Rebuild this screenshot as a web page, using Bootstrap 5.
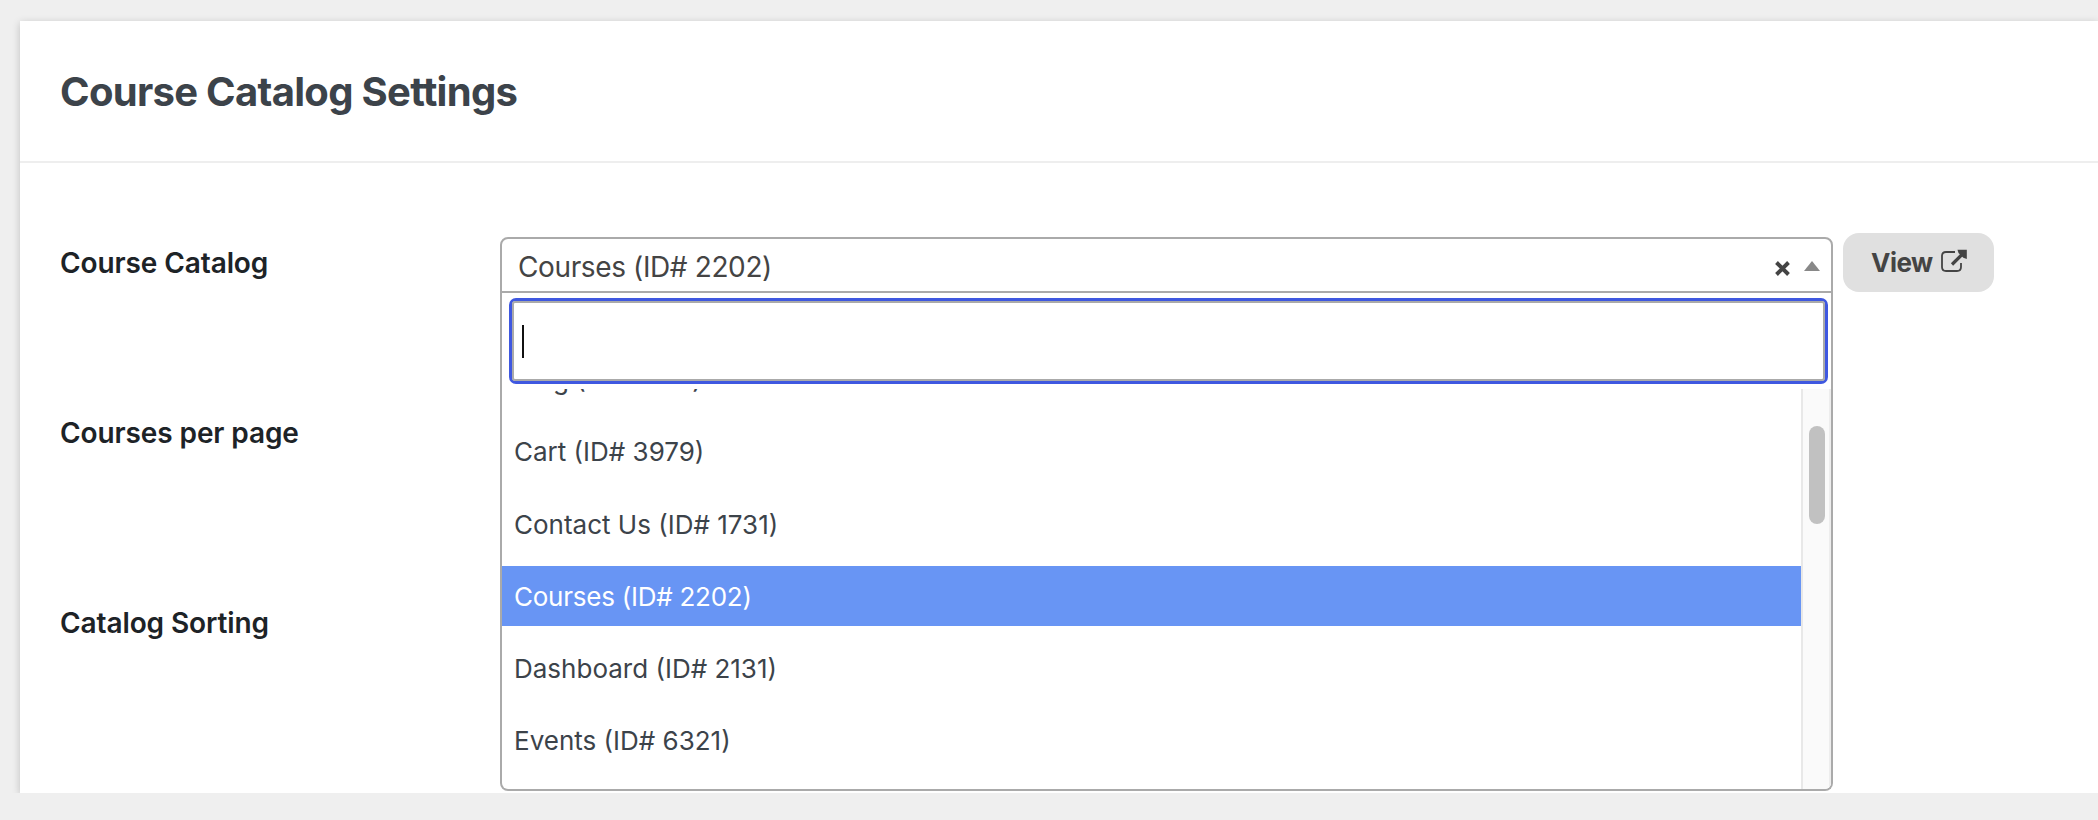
<!DOCTYPE html>
<html lang="en">
<head>
<meta charset="utf-8">
<meta name="viewport" content="width=device-width, initial-scale=1">
<title>Course Catalog Settings</title>
<link href="https://cdn.jsdelivr.net/npm/bootstrap@5.3.0/dist/css/bootstrap.min.css" rel="stylesheet">
<script defer src="https://cdn.jsdelivr.net/npm/bootstrap@5.3.0/dist/js/bootstrap.bundle.min.js"></script>
<style>
body{background:#efefef;font-family:Inter,"Liberation Sans",sans-serif;font-size:28px;overflow:hidden}
.panel{margin:21px 0 0 20px;height:772px;background:#fff;box-shadow:0 2px 8px rgba(0,0,0,.2)}
.panel-head{height:142px;border-bottom:2px solid #eee;padding:1px 40px 0}
.panel-head h1{font-size:40px;font-weight:700;color:#3c434a;margin:0;line-height:48px;letter-spacing:-.7px}
.settings{padding:70px 40px 0}
.setting{display:grid;grid-template-columns:440px 1fr}
.setting.first{height:170px}
.setting.second{height:190px}
.label-text{font-weight:600;color:#1d2327;line-height:34px;margin-top:13px;letter-spacing:-.1px}
.picker{width:1333px;margin-top:4px}
.picker-value{height:56px;border:2px solid #aaa;border-radius:8px 8px 0 0;padding:0 11px 0 16px;color:#444}
.picker-value span{letter-spacing:-.38px;line-height:56px}
.picker-value svg{margin-top:22px}
.picker-value .clear-mark{margin-right:14px}
.picker-menu{top:56px;left:0;width:100%;height:498px;border:2px solid #aaa;border-top:0;border-radius:0 0 8px 8px;background:#fff;overflow:hidden}
.search-box{margin:5px 3px 5px 7px;height:86px;border:3px solid #3f58e0;border-radius:7px}
.search-inner{height:100%;border:2px solid #aaa;border-radius:3px;padding:22px 0 0 8px}
.caret-bar{width:2px;height:33px;background:#111}
.options{height:400px}
.options ul{margin-top:-40px}
.options li{height:60px;margin-bottom:12.3px;padding:0 12px;line-height:61px;font-size:26px;color:#3c434a;white-space:nowrap}
.options li.chosen{background:#6895f4;color:#fff;letter-spacing:-.25px}
.track{width:30px;background:#fafafa;border-left:2px solid #e8e8e8;border-right:2px solid #ededed;padding:37px 0 0 6px}
.thumb{width:16px;height:98px;border-radius:8px;background:#c1c1c1}
.btn-view,.btn-view:hover{width:151px;height:59px;border:0;border-radius:16px;background:#e0e0e0;color:#444;font-size:26px;font-weight:700;margin-left:10px;padding:0 0 0 28px;letter-spacing:-.5px;line-height:59px}
.btn-view svg{margin:16px 0 0 7px}
</style>
</head>
<body>
<main class="panel">
  <header class="panel-head d-flex align-items-center"><h1>Course Catalog Settings</h1></header>
  <div class="settings">
    <div class="setting first">
      <div class="label-text">Course Catalog</div>
      <div class="d-flex align-items-start">
        <div class="picker position-relative">
          <div class="picker-value d-flex align-items-start">
            <span class="me-auto">Courses (ID# 2202)</span>
            <svg class="clear-mark" width="15" height="15" viewBox="0 0 15 15" aria-label="Clear"><path d="M1.500 1.500l12 12M13.500 1.500l-12 12" stroke="#444" stroke-width="3.900" fill="none"/></svg>
            <svg width="16" height="10" viewBox="0 0 16 10" aria-hidden="true"><path d="M0 10L8 0l8 10z" fill="#888"/></svg>
          </div>
          <div class="picker-menu position-absolute">
            <div class="search-box"><div class="search-inner"><div class="caret-bar"></div></div></div>
            <div class="options d-flex overflow-hidden">
              <ul class="list-unstyled flex-grow-1 mb-0">
                <li>Blog (ID# 1739)</li>
                <li>Cart (ID# 3979)</li>
                <li>Contact Us (ID# 1731)</li>
                <li class="chosen">Courses (ID# 2202)</li>
                <li>Dashboard (ID# 2131)</li>
                <li>Events (ID# 6321)</li>
              </ul>
              <div class="track"><div class="thumb"></div></div>
            </div>
          </div>
        </div>
        <a class="btn btn-view d-flex align-items-start" href="#">View<svg width="27" height="24" viewBox="0 0 27 24" fill="none" aria-hidden="true"><path d="M15 3H6Q2 3 2 7v11q0 4 4 4h11q4 0 4-4v-4" stroke="#444" stroke-width="1.800"/><path d="M12 15.500L22.500 5" stroke="#444" stroke-width="3.200"/><path d="M17.500 .8h9.300V10l-3.500-1.200-4.800-4.800z" fill="#444"/></svg></a>
      </div>
    </div>
    <div class="setting second"><div class="label-text">Courses per page</div></div>
    <div class="setting"><div class="label-text">Catalog Sorting</div></div>
  </div>
</main>
</body>
</html>
